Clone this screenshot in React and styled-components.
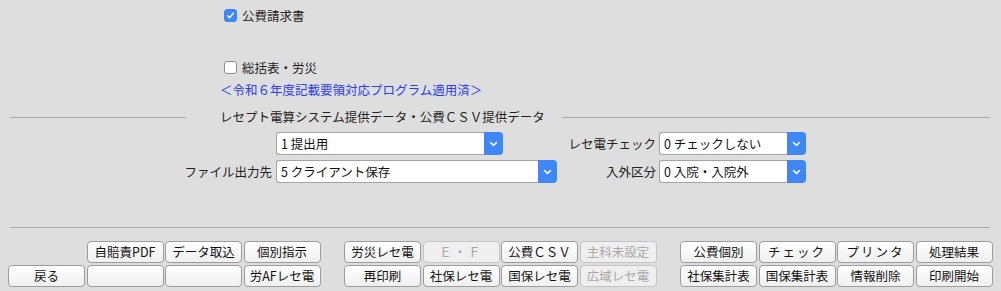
import React from "react";
import styled, { createGlobalStyle } from "styled-components";

const Global = createGlobalStyle`
  html, body { margin: 0; padding: 0; background: #dedede; }
  body {
    font-family: "Noto Sans CJK JP", "Noto Sans", sans-serif;
    font-size: 12.5px;
    color: #222;
  }
  * { box-sizing: border-box; }
`;

const Page = styled.div`
  width: 1001px;
  height: 291px;
  padding-top: 6px;
  display: flex;
  flex-direction: column;
  overflow: hidden;
`;

const CheckRow = styled.label`
  display: flex;
  align-items: center;
  gap: 5px;
  height: 18px;
  padding-left: 224px;
  margin-top: ${(p) => p.$mt || 0}px;
`;

const Box = styled.span`
  width: 13px;
  height: 13px;
  border-radius: 3px;
  display: inline-flex;
  align-items: center;
  justify-content: center;
  background: ${(p) => (p.$checked ? "#3d86f6" : "#ffffff")};
  border: 1px solid ${(p) => (p.$checked ? "#3d86f6" : "#8e8e8e")};
`;

const Notice = styled.div`
  margin-top: 5px;
  height: 18px;
  line-height: 18px;
  padding-left: 220px;
  color: #2a3df0;
`;

const Header = styled.div`
  margin-top: 9px;
  height: 18px;
  display: flex;
  align-items: center;
  padding: 0 11px 0 10px;
`;

const Rule = styled.div`
  height: 1px;
  background: #a8a8a8;
  width: ${(p) => (p.$w ? `${p.$w}px` : "auto")};
  flex: ${(p) => (p.$w ? "none" : "1")};
`;

const Legend = styled.div`
  padding: 0 17px 0 34px;
  line-height: 18px;
  white-space: nowrap;
`;

const FormGrid = styled.div`
  margin-top: 6px;
  margin-left: 10px;
  display: grid;
  grid-template-columns: 266px 281px 102px 147px;
  grid-auto-rows: 23px;
  row-gap: 5px;
  align-items: center;
`;

const Label = styled.div`
  text-align: right;
  padding-right: ${(p) => p.$pr || 4}px;
  white-space: nowrap;
`;

const SelectBox = styled.div`
  display: flex;
  height: 23px;
  width: ${(p) => (p.$w ? `${p.$w}px` : "100%")};
`;

const SelectText = styled.div`
  flex: 1;
  background: #fff;
  border: 1px solid #a4a4a4;
  border-right: none;
  border-radius: 3px 0 0 3px;
  padding-left: 4px;
  line-height: 21px;
  white-space: nowrap;
  color: #111;
`;

const SelectArrow = styled.div`
  width: 19px;
  background: #3f87f5;
  border-radius: 0 4px 4px 0;
  display: flex;
  align-items: center;
  justify-content: center;
`;

const BottomRule = styled.div`
  margin: 44px 11px 0 10px;
  height: 1px;
  background: #a8a8a8;
`;

const ButtonBar = styled.div`
  margin-top: 13px;
  padding-left: 8px;
  display: flex;
  gap: 23.5px;
`;

const ButtonGroup = styled.div`
  display: grid;
  grid-template-columns: repeat(4, 77px);
  grid-auto-rows: 22px;
  column-gap: 1.5px;
  row-gap: 2px;
`;

const Spacer = styled.div``;

const Btn = styled.button`
  font-family: inherit;
  font-size: 12.5px;
  padding: 0;
  height: 22px;
  white-space: nowrap;
  border-radius: 4px;
  border: 1px solid ${(p) => (p.disabled ? "#c4c4c4" : "#9c9c9c")};
  background: ${(p) =>
    p.disabled ? "#efefef" : "linear-gradient(#ffffff, #f0f0f0)"};
  color: ${(p) => (p.disabled ? "#a8a8a8" : "#111")};
  line-height: 20px;
  letter-spacing: ${(p) => (p.$wide ? "2px" : "0")};
`;

const Check = () => (
  <svg width="9" height="9" viewBox="0 0 10 10">
    <path d="M1.8 5.3 L4 7.5 L8.3 2.3" fill="none" stroke="#fff" strokeWidth="1.6" strokeLinecap="round" strokeLinejoin="round" />
  </svg>
);

const Chevron = () => (
  <svg width="9" height="6" viewBox="0 0 9 6">
    <path d="M1.5 1.5 L4.5 4.3 L7.5 1.5" fill="none" stroke="#fff" strokeWidth="1.6" strokeLinecap="round" strokeLinejoin="round" />
  </svg>
);

const Select = ({ value, w }) => (
  <SelectBox $w={w}>
    <SelectText>{value}</SelectText>
    <SelectArrow>
      <Chevron />
    </SelectArrow>
  </SelectBox>
);

const groups = [
  [
    [null, "自賠責PDF", "データ取込", "個別指示"],
    ["戻る", "", "", "労AFレセ電"],
  ],
  [
    ["労災レセ電", { t: "Ｅ・Ｆ", d: true }, "公費ＣＳＶ", { t: "主科未設定", d: true }],
    ["再印刷", "社保レセ電", "国保レセ電", { t: "広域レセ電", d: true }],
  ],
  [
    ["公費個別", "チェック", "プリンタ", "処理結果"],
    ["社保集計表", "国保集計表", "情報削除", "印刷開始"],
  ],
];

export default function App() {
  return (
    <Page>
      <Global />
      <CheckRow>
        <Box $checked>
          <Check />
        </Box>
        公費請求書
      </CheckRow>
      <CheckRow $mt={34}>
        <Box />
        総括表・労災
      </CheckRow>
      <Notice>＜令和６年度記載要領対応プログラム適用済＞</Notice>
      <Header>
        <Rule $w={176} />
        <Legend>レセプト電算システム提供データ・公費ＣＳＶ提供データ</Legend>
        <Rule />
      </Header>
      <FormGrid>
        <Label />
        <Select value="1 提出用" w={227} />
        <Label $pr={3}>レセ電チェック</Label>
        <Select value="0 チェックしない" />
        <Label>ファイル出力先</Label>
        <Select value="5 クライアント保存" />
        <Label $pr={3}>入外区分</Label>
        <Select value="0 入院・入院外" />
      </FormGrid>
      <BottomRule />
      <ButtonBar>
        {groups.map((g, gi) => (
          <ButtonGroup key={gi}>
            {g.flat().map((b, i) => {
              if (b === null) return <Spacer key={i} />;
              const t = typeof b === "string" ? b : b.t;
              const d = typeof b === "object" && b.d;
              const wide = t === "チェック" || t === "プリンタ" || t === "Ｅ・Ｆ";
              return (
                <Btn key={i} disabled={d} $wide={wide}>
                  {t}
                </Btn>
              );
            })}
          </ButtonGroup>
        ))}
      </ButtonBar>
    </Page>
  );
}
